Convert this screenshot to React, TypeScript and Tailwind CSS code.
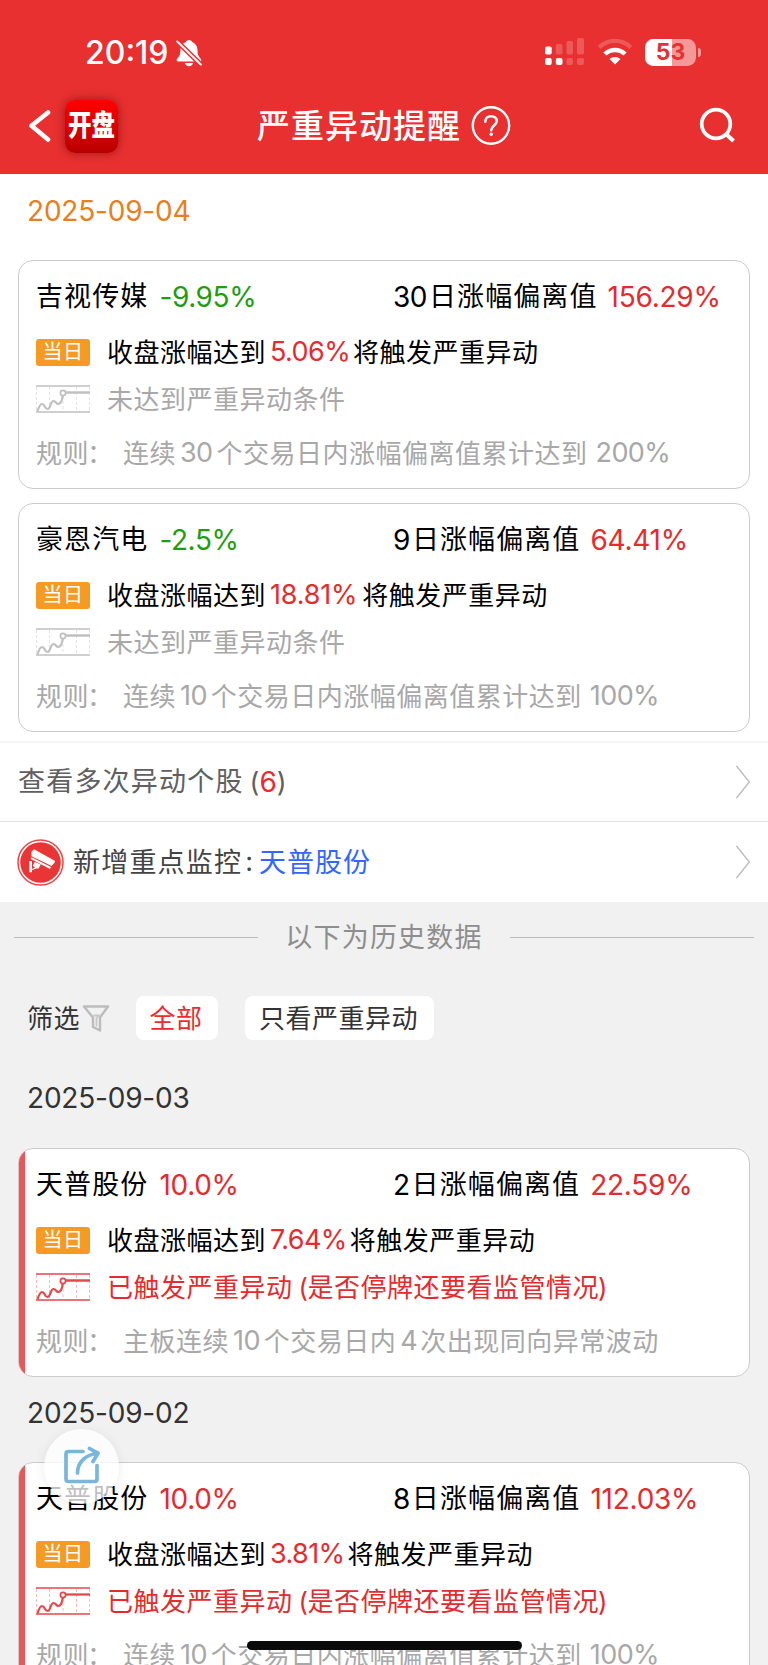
import type { ReactNode } from "react";

type Stock = {
  name: string;
  change: string;
  up: boolean;
  days: string;
  deviation: string;
  trigger: string;
  triggered: boolean;
  rule: ReactNode;
};

const FONT = "font-['Inter','Noto_Sans_CJK_SC',sans-serif]";

function Num({ children }: { children: ReactNode }) {
  return <span className="text-[27px] tracking-[-0.6px]">{children}</span>;
}

function TrendIcon({ triggered }: { triggered: boolean }) {
  const color = triggered ? "#e8474a" : "#c0c0c0";
  const faint = triggered ? "#f6bcbc" : "#e2e2e2";
  return (
    <svg width="54" height="28" viewBox="0 0 54 28" fill="none" className="shrink-0">
      <path d="M.5 2v24M13.500 2v24M27 11v15M40.500 2v24M53.500 2v24" stroke={faint} strokeWidth="1" strokeDasharray="3 2" />
      <path d="M0 1h54M0 27h54" stroke={color} strokeWidth="1.500" />
      <path d="M1.500 26.500C3 21.500 4 19 6 19c3 0 2.500 5 5.500 5 3.500 0 2.500-8 6-8 2.500 0 2.500 3 4.800 3C25.500 19 26.300 14 26.800 10.500" stroke={color} strokeWidth="2.200" />
      <circle cx="27" cy="8" r="2.600" stroke={color} strokeWidth="1.700" />
      <path d="M29.500 7.500H54" stroke={color} strokeWidth="2.300" />
    </svg>
  );
}

function StockCard({ s }: { s: Stock }) {
  return (
    <div className="relative mx-[18px] h-[229px] shrink-0 overflow-hidden rounded-[15px] border border-[#cbcbcb] bg-white pl-[17px] pt-[16px]">
      {s.triggered && <div className="absolute inset-y-0 left-0 w-[6px] bg-[#ea565a]" />}
      <div className="flex h-10 items-center whitespace-nowrap text-[27px] tracking-[1.1px] text-black">
        <div className="flex w-[357px] items-center">
          <span>{s.name}</span>
          <span className={s.up ? "ml-[11px] text-[28px] tracking-[-0.300px] text-[#e22c2e]" : "ml-[11px] text-[28px] tracking-[-0.400px] text-[#1f9d0f]"}>{s.change}</span>
        </div>
        <span className="text-[28px] tracking-[-0.500px]">{s.days}</span>
        <span className="ml-[2px]">日涨幅偏离值</span>
        <span className="ml-[10px] text-[28px] tracking-[-0.250px] text-[#e22c2e]">{s.deviation}</span>
      </div>
      <div className="mt-[15px] flex h-10 items-center whitespace-nowrap text-[26px] tracking-[0.500px] text-black">
        <div className="mr-[17px] flex h-[27px] w-[54px] items-center justify-center rounded-[3px] bg-[#f59a23] text-[20px] tracking-[0.500px] text-white">当日</div>
        <span>收盘涨幅达到</span>
        <span className={s.trigger.length > 5 ? "ml-[4px] mr-[5px] text-[27px] tracking-[-0.200px] text-[#e22c2e]" : "ml-[4px] mr-[3px] text-[27px] tracking-[-0.600px] text-[#e22c2e]"}>{s.trigger}</span>
        <span>将触发严重异动</span>
      </div>
      <div className="mt-[7px] flex h-10 items-center whitespace-nowrap text-[26px] tracking-[0.500px]">
        <div className="mr-[17px] flex">
          <TrendIcon triggered={s.triggered} />
        </div>
        {s.triggered ? (
          <span className="text-[#e22c2e]">
            已触发严重异动<span className="ml-[6px] tracking-[-0.500px]">(</span>是否停牌还要看监管情况<span className="-ml-px">)</span>
          </span>
        ) : (
          <span className="text-[#a8a8a8]">未达到严重异动条件</span>
        )}
      </div>
      <div className="mt-[14px] flex h-10 items-center whitespace-nowrap text-[26px] tracking-[0.500px] text-[#a8a8a8]">
        <span className="w-[87px]">
          规则<span className="-ml-[2px]">：</span>
        </span>
        <span className="flex items-center">{s.rule}</span>
      </div>
    </div>
  );
}

function Rule({ before = "连续", n, after, end }: { before?: string; n: string; after: ReactNode; end?: string }) {
  return (
    <>
      <span className="mr-[4px]">{before}</span>
      <Num>{n}</Num>
      <span className="ml-[4px]">{after}</span>
      {end && (
        <span className="ml-[8px]">
          <Num>{end}</Num>
        </span>
      )}
    </>
  );
}

const today: Stock[] = [
  { name: "吉视传媒", change: "-9.95%", up: false, days: "30", deviation: "156.29%", trigger: "5.06%", triggered: false, rule: <Rule n="30" after="个交易日内涨幅偏离值累计达到" end="200%" /> },
  { name: "豪恩汽电", change: "-2.5%", up: false, days: "9", deviation: "64.41%", trigger: "18.81%", triggered: false, rule: <Rule n="10" after="个交易日内涨幅偏离值累计达到" end="100%" /> },
];

const sept3: Stock = {
  name: "天普股份", change: "10.0%", up: true, days: "2", deviation: "22.59%", trigger: "7.64%", triggered: true,
  rule: (
    <>
      <Rule before="主板连续" n="10" after="个交易日内" />
      <span className="ml-[4px] mr-[3px]">
        <Num>4</Num>
      </span>
      <span>次出现同向异常波动</span>
    </>
  ),
};

const sept2: Stock = {
  name: "天普股份", change: "10.0%", up: true, days: "8", deviation: "112.03%", trigger: "3.81%", triggered: true,
  rule: <Rule n="10" after="个交易日内涨幅偏离值累计达到" end="100%" />,
};

function Header() {
  return (
    <header className="h-[174px] shrink-0 bg-[#e83030] text-white">
      <div className="flex h-[104px] items-center pl-[85px] pr-[67px]">
        <span className="pt-[2px] text-[32px] font-medium tracking-[0px]">20:19</span>
        <svg width="26" height="28" viewBox="0 0 26 28" className="ml-[7px] mt-[1px]" fill="none">
          <path d="M13 1c-1.800 0-2.800 1-3.200 2C6 4.500 4.500 7.500 4.500 11c0 5-1.500 6.500-3.500 9-.9 1.300-.2 2.500 1 2.500h22c1.200 0 1.800-1.200.8-2.500-2-2.500-3.300-4-3.300-9 0-3.500-1.800-6.500-5.300-8-.4-1-1.400-2-3.200-2z" fill="#fff" />
          <path d="M8.800 24h8.400c-.5 2-2 3.200-4.200 3.200S9.300 26 8.800 24z" fill="#fff" />
          <path d="M0 1.300L26 26.700" stroke="#e83030" strokeWidth="5" />
          <path d="M1.200 2.500L24.800 25.500" stroke="#fff" strokeWidth="2" strokeLinecap="round" />
        </svg>
        <div className="ml-auto flex items-center">
          <svg width="40" height="28" viewBox="0 0 40 28" fill="#fff">
            <rect x="1" y="8.500" width="6.700" height="8" rx="1.800" />
            <rect x="11.800" y="6" width="6.700" height="10.500" rx="1.800" opacity=".2" />
            <rect x="22.500" y="3" width="6.500" height="13.500" rx="1.800" opacity=".2" />
            <rect x="33" y="0" width="7" height="16.500" rx="1.800" opacity=".2" />
            <rect x="1" y="20" width="6.700" height="7" rx="2" />
            <rect x="11.800" y="20" width="6.700" height="7" rx="2" />
            <rect x="22.500" y="20" width="6.500" height="7" rx="2" opacity=".2" />
            <rect x="33" y="20" width="7" height="7" rx="2" opacity=".2" />
          </svg>
          <svg width="36" height="28" viewBox="0 0 36 28" fill="none" className="ml-[13px]" stroke="#fff">
            <path d="M2.200 9.500a22.300 22.300 0 0 1 31.600 0" strokeWidth="4.200" opacity=".2" />
            <path d="M7.900 16a14.600 14.600 0 0 1 20.200 0" strokeWidth="4.500" />
            <path d="M12.500 21a8.300 8.300 0 0 1 11 0L18 26.500z" fill="#fff" stroke="none" />
          </svg>
          <div className="relative ml-[12px] flex h-[27px] w-[51px] items-center justify-center overflow-hidden rounded-[8.500px] bg-white/50">
            <div className="absolute inset-y-0 left-0 w-[27px] bg-white" />
            <span className="relative text-[23px] font-bold leading-none tracking-[0px] text-[#e83030]">53</span>
          </div>
          <div className="ml-[2px] h-[9px] w-[3px] rounded-r-full bg-white/50" />
        </div>
      </div>
      <div className="flex h-[44px] items-center pl-[28px] pr-[31px]">
        <svg width="23" height="34" viewBox="0 0 23 34" fill="none" stroke="#fff" strokeWidth="4.600" strokeLinecap="round" strokeLinejoin="round">
          <path d="M20 3.500L3.500 16.800 20 30.500" />
        </svg>
        <div className="ml-[14px] flex size-[53px] items-center justify-center rounded-[10px] bg-gradient-to-b from-[#ff0000] to-[#b80000] shadow-[0_0_10px_rgba(90,0,0,0.55)]">
          <span className="scale-y-[1.240] text-[23.500px] font-black leading-none">开盘</span>
        </div>
        <h1 className="ml-[139px] pt-[2px] text-[33px] font-medium tracking-[1px]">严重异动提醒</h1>
        <svg width="40" height="40" viewBox="0 0 40 40" fill="none" stroke="#fff" className="ml-[10px]">
          <circle cx="20" cy="19.500" r="18.200" strokeWidth="2.400" />
          <path d="M14.300 15.700c0-3.300 2.400-5.500 5.700-5.500s5.800 2 5.800 4.900c0 4-5.600 4.300-5.600 9.200" strokeWidth="2.500" strokeLinecap="round" />
          <circle cx="20.200" cy="28.200" r="1.700" fill="#fff" stroke="none" />
        </svg>
        <svg width="38" height="38" viewBox="0 0 38 38" fill="none" stroke="#fff" strokeWidth="3.700" className="ml-auto">
          <circle cx="17" cy="17" r="14.300" />
          <path d="M27 27l7.500 7" strokeWidth="4" />
        </svg>
      </div>
    </header>
  );
}

function Chevron() {
  return (
    <svg width="16" height="34" viewBox="0 0 16 34" fill="none" stroke="#bdbdbd" strokeWidth="1.400" className="-mr-px ml-auto">
      <path d="M1.500 1L14.300 17 1.500 33" />
    </svg>
  );
}

function CameraIcon() {
  return (
    <svg width="47" height="47" viewBox="0 0 47 47" className="-ml-px">
      <circle cx="23.500" cy="23.500" r="22.500" fill="#fff" stroke="#e8474a" strokeWidth="1.500" />
      <circle cx="23.500" cy="23.500" r="20.300" fill="#e93535" />
      <path d="M17 10.300l20.300 11.200c.8.500.8 1.200.3 1.900l-3 3.600L14.500 17.200v-4.500z" fill="#fff" />
      <path d="M14.500 18.300L34 28l-1 2L13.500 19.700z" fill="#fff" />
      <path d="M12.300 22h2.700v8l2.800-1.200-2-2.300 2-3.500 6 2.500-2.300 4h-2L15 31v2.300h-2.700z" fill="#fff" />
    </svg>
  );
}

function DateLine({ children }: { children: ReactNode }) {
  return <div className="flex h-10 shrink-0 items-center pl-[27px] text-[28px] tracking-[-0.200px] text-[#333333]">{children}</div>;
}

export default function App() {
  return (
    <div className={`relative flex h-[1665px] w-[768px] flex-col overflow-hidden bg-[#f1f1f1] ${FONT}`}>
      <Header />
      <section className="flex h-[567px] shrink-0 flex-col bg-white pt-[17px]">
        <div className="mb-[29px] flex h-10 shrink-0 items-center pl-[27px] text-[28px] tracking-[-0.200px] text-[#e6801c]">2025-09-04</div>
        <div className="flex flex-col gap-[14px]">
          {today.map((s) => (
            <StockCard key={s.name} s={s} />
          ))}
        </div>
      </section>
      <div className="flex h-[81px] shrink-0 items-center border-b border-t-2 border-b-[#e2e2e2] border-t-[#f4f4fa] bg-white px-[18px] text-[27px] tracking-[1.200px] text-[#606060]">
        <span>查看多次异动个股</span>
        <span className="ml-[6px] tracking-[0px]">(<span className="text-[28px] text-[#f0282d]">6</span>)</span>
        <Chevron />
      </div>
      <div className="flex h-[80px] shrink-0 items-center bg-white px-[18px] text-[27px] tracking-[1.200px] text-[#444444]">
        <CameraIcon />
        <span className="ml-[9px] pt-[2px]">新增重点监控</span>
        <span className="ml-[3px] mr-[6px] tracking-[0px]">:</span>
        <span className="pt-[2px] tracking-[1px] text-[#3366ff]">天普股份</span>
        <Chevron />
      </div>
      <div className="flex h-[71px] shrink-0 items-center gap-[27px] px-[14px] text-[27px] tracking-[1.200px] text-[#8e8e8e]">
        <div className="h-px flex-1 bg-[#bcbcbc]" />
        <span className="pt-[2px]">以下为历史数据</span>
        <div className="h-px flex-1 bg-[#bcbcbc]" />
      </div>
      <div className="mt-[23px] flex h-[44px] shrink-0 items-center pl-[27px] text-[26px] tracking-[0.500px] text-[#333333]">
        <span>筛选</span>
        <svg width="28" height="28" viewBox="0 0 28 28" fill="none" className="ml-[2px]">
          <path d="M2 2.500h24L18 13.500V26.500L11 23V13.500z" stroke="#bcbcbc" strokeWidth="2.400" strokeLinejoin="round" />
          <path d="M11.500 11.500h5L14.500 14.500v8" stroke="#c8c8c8" strokeWidth="1.800" />
        </svg>
        <button className="ml-[26px] h-[44px] w-[82px] rounded-[8px] bg-white pr-[2px] tracking-[0.500px] text-[#ee2a2d]">全部</button>
        <button className="ml-[27px] h-[44px] w-[189px] rounded-[8px] bg-white pr-[2px] tracking-[0.500px]">只看严重异动</button>
      </div>
      <div className="mb-[30px] mt-[38px] shrink-0">
        <DateLine>2025-09-03</DateLine>
      </div>
      <StockCard s={sept3} />
      <div className="mb-[29px] mt-[16px] shrink-0">
        <DateLine>2025-09-02</DateLine>
      </div>
      <StockCard s={sept2} />
      <button className="absolute left-[44px] top-[1429px] flex size-[75px] items-center justify-center rounded-full bg-white/75 shadow-[0_2px_12px_rgba(0,0,0,0.08)]">
        <svg width="38" height="38" viewBox="0 0 38 38" fill="none" stroke="#78b6da" strokeWidth="3.700" strokeLinecap="round" strokeLinejoin="round" className="-mt-[3px]">
          <path d="M20 5.500H5.500C4 5.500 3 6.500 3 8v25c0 1.500 1 2.500 2.500 2.500h26c1.500 0 2.500-1 2.500-2.500V19.500" />
          <path d="M14.500 27C14.500 17 22 8.500 34.500 7.500M26.500 2.500L35 7.200 30 15.500" />
        </svg>
      </button>
      <div className="absolute left-[247px] top-[1641px] h-[9px] w-[275px] rounded-full bg-[#0a0a0a]" />
    </div>
  );
}
